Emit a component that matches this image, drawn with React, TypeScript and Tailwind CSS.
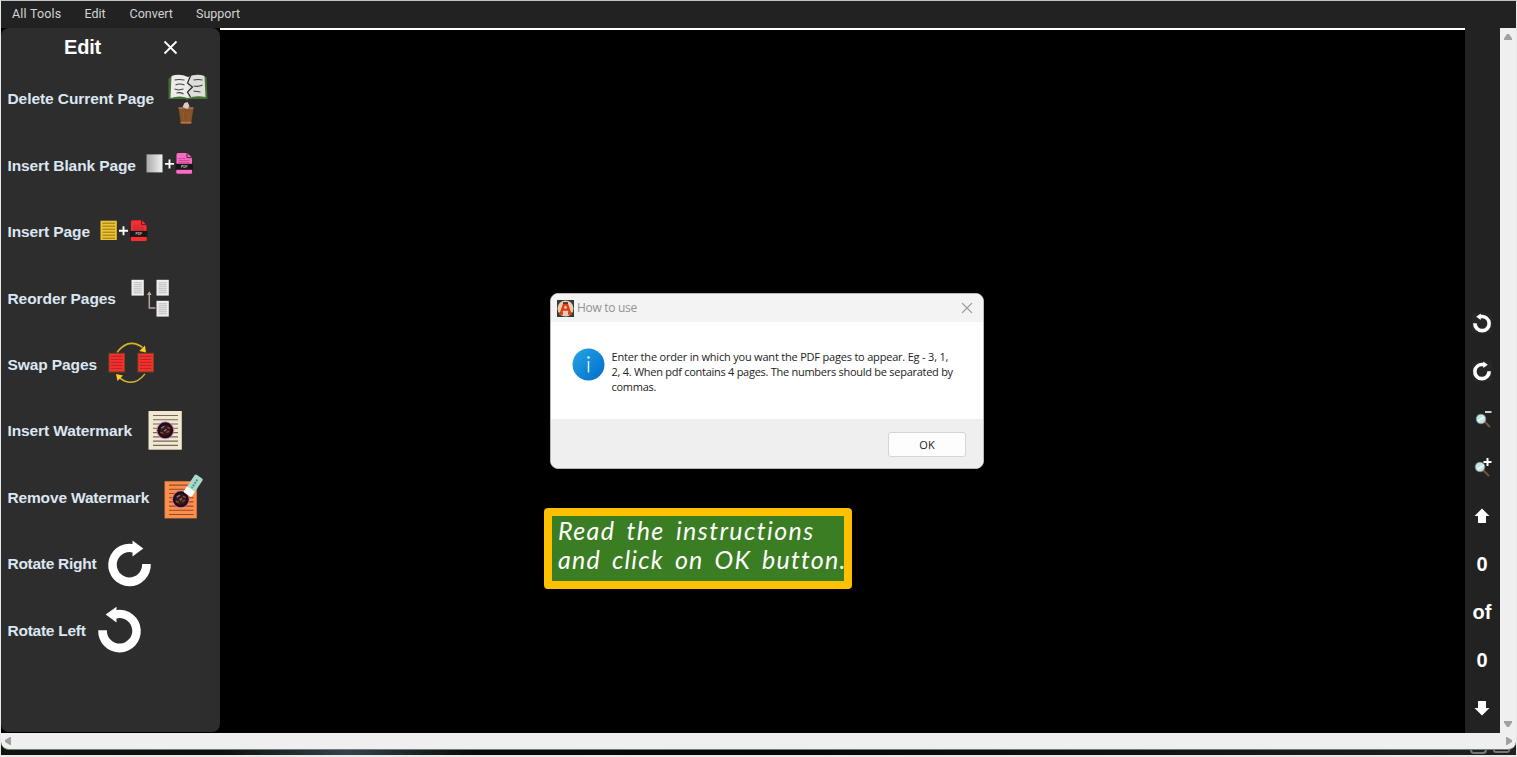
import type { ReactNode } from "react";

function PdfFile({ x, y, fill }: { x: number; y: number; fill: string }) {
  return (
    <g>
      <path d={`M${x + 1} ${y + 1.5}q0-1.5 1.5-1.5h9l5 4.5v15.500h-15.500z`} fill={fill} />
      <path d={`M${x + 11.500} ${y}v4.500h5`} fill="none" stroke="#33202b" strokeWidth="0.9" />
      <path d={`M${x + 3} ${y + 5.500}h7M${x + 3} ${y + 7.500}h11M${x + 3} ${y + 9.500}h11`} stroke="#6b2848" strokeOpacity="0.55" strokeWidth="0.8" />
      <rect x={x} y={y + 10.700} width="17.500" height="6" fill="#171717" />
      <text x={x + 8.800} y={y + 15} textAnchor="middle" fontSize="3.400" fontWeight="bold" fill="#bbb" fontFamily="Liberation Sans, sans-serif">PDF</text>
      <rect x={x + 1} y={y + 17} width="15.500" height="3.700" rx="1" fill={fill} />
    </g>
  );
}

function Lines({ x, y, w, n, gap, color, sw = 1 }: { x: number; y: number; w: number; n: number; gap: number; color: string; sw?: number }) {
  return <path d={Array.from({ length: n }, (_, i) => `M${x} ${y + i * gap}h${w}`).join("")} stroke={color} strokeWidth={sw} />;
}

function Stamp({ x, y }: { x: number; y: number }) {
  return (
    <g>
      <circle cx={x} cy={y} r="9" fill="#d66bc1" opacity="0.7" />
      <circle cx={x} cy={y} r="8" fill="#1c1013" />
      <circle cx={x} cy={y} r="5.500" fill="#321c1e" />
      <path d={`M${x - 4} ${y - 2}l3-2M${x - 1} ${y + 1}l2-2`} stroke="#8c8088" strokeWidth="1.300" />
      <path d={`M${x - 5} ${y + 2}l3 1M${x + 2} ${y - 3}l3 1M${x + 1} ${y + 2}l3-1`} stroke="#b93b2b" strokeWidth="1.400" />
    </g>
  );
}

function RotateRight({ x, y }: { x: number; y: number }) {
  return (
    <g transform={`translate(${x} ${y})`} fill="#fff">
      <path d="M12.600-.6H21.300A21.300 21.300 0 1 1 3-20.800V-24.100L13.800-16.200L3-8.300V-12.300A12.700 12.700 0 1 0 12.600-.6Z" />
    </g>
  );
}

const items: { label: string; w: string; iw: number; x: number; icon: ReactNode }[] = [
  {
    label: "Delete Current Page", w: "w-[158px] tracking-[-0.080px]", iw: 44, x: 166,
    icon: (
      <g>
        <path d="M168 79L170 77H206L207 99H188.500L187 100L185 99H168Z" fill="#477036" />
        <path d="M171 76Q179 73 187.500 77V98Q179 95 170 98Z" fill="#ececea" />
        <path d="M187.500 77Q196 73 204 76L205 97Q196 95 187.500 98Z" fill="#dededb" />
        <path d="M190 76L187 83L192 87L187 92L190 97" fill="none" stroke="#262626" strokeWidth="1.200" />
        <path d="M174 80q4-1 10 0M175 85q4-2 9 0M174 89l4 1 5-1M176 93q4-1 7 1M193 80q5-1 9 0M193 86q5 1 9-1M193 91l7 1" fill="none" stroke="#444" strokeWidth="1.100" />
        <path d="M178 108H193L190.500 124H180.500Z" fill="#875329" />
        <path d="M178 108H193M180 122.500h11" stroke="#b8753c" strokeWidth="1.500" />
        <path d="M183 112v8M188 112v8" stroke="#96592c" />
        <path d="M182 107l2-4 3-1 2 4-2 3z" fill="#d8ccd0" />
      </g>
    ),
  },
  {
    label: "Insert Blank Page", w: "w-[135px] tracking-[-0.100px]", iw: 55, x: 143,
    icon: (
      <g>
        <defs><linearGradient id="blank"><stop stopColor="#a9a9a9" /><stop offset="1" stopColor="#f1f1f1" /></linearGradient></defs>
        <rect x="146" y="154.800" width="16" height="18" fill="url(#blank)" />
        <path d="M164.500 164.300h9M169 159.800v9" stroke="#fff" strokeWidth="1.900" />
        <PdfFile x={175} y={153.500} fill="#ff6ac4" />
      </g>
    ),
  },
  {
    label: "Insert Page", w: "w-[89px] tracking-[-0.100px]", iw: 55, x: 97,
    icon: (
      <g>
        <rect x="100" y="220.500" width="16.300" height="19.300" fill="#efc32d" />
        <Lines x={102} y={223} w={12.500} n={6} gap={3} color="#8e7421" />
        <path d="M118.500 230.500h9M123 226v9" stroke="#fff" strokeWidth="1.900" />
        <PdfFile x={129.500} y={220} fill="#fb2d2f" />
      </g>
    ),
  },
  {
    label: "Reorder Pages", w: "w-[120px] tracking-[-0.080px]", iw: 44, x: 128,
    icon: (
      <g>
        {[[131, 280], [156, 280], [156, 301]].map(([x, y]) => (
          <g key={`${x}-${y}`}>
            <rect x={x} y={y} width="12.300" height="15.800" fill="#eee" />
            <Lines x={x + 2} y={y + 3} w={8.300} n={6} gap={2} color="#b5b5b5" sw={0.9} />
          </g>
        ))}
        <path d="M155 308.300H148.800V294" fill="none" stroke="#b5a594" strokeWidth="1.500" />
        <path d="M148.800 291.500l2.300 3.800h-4.600z" fill="#c5b09a" />
      </g>
    ),
  },
  {
    label: "Swap Pages", w: "w-[96px] tracking-[-0.100px]", iw: 54, x: 104,
    icon: (
      <g>
        {[108, 137].map((x) => (
          <g key={x}>
            <rect x={x + 0.500} y="353" width="15.500" height="18.500" fill="#f5302d" stroke="#81421e" />
            <Lines x={x + 2.500} y={356} w={11.500} n={5} gap={3} color="#b32622" />
          </g>
        ))}
        <path d="M116.500 352Q128 337 142 347M144.500 373.500Q133 388 119 377.500" fill="none" stroke="#d9b22c" strokeWidth="1.500" />
        <path d="M145.500 352l-1-7-5.700 5.500zM115.500 373.500l7 1.500-5.500 5.700z" fill="#ffc922" />
      </g>
    ),
  },
  {
    label: "Insert Watermark", w: "w-[131px] tracking-[-0.100px]", iw: 48, x: 139,
    icon: (
      <g>
        <rect x="148" y="411" width="33.300" height="38.700" fill="#f2e8cf" />
        <Lines x={152.500} y={415.500} w={25} n={8} gap={4.270} color="#6f6960" sw={1.100} />
        <Stamp x={164.800} y={430.300} />
      </g>
    ),
  },
  {
    label: "Remove Watermark", w: "w-[148px] tracking-[-0.160px]", iw: 50, x: 156,
    icon: (
      <g>
        <rect x="164.300" y="481.600" width="32" height="37" fill="#ff8e4b" stroke="#a76b43" strokeWidth="0.500" />
        <Lines x={168.500} y={485.500} w={24.500} n={8} gap={4.200} color="#8b4e2e" sw={1.100} />
        <Stamp x={180.300} y={499.700} />
        <g transform="translate(193 485.800) rotate(34)">
          <rect x="-4.800" y="-10.500" width="9.600" height="21" rx="1.500" fill="#a8d9cc" />
          <rect x="-4.800" y="4.500" width="9.600" height="6.500" rx="1" fill="#fff" />
          <path d="M0-7v10" stroke="#518f86" strokeWidth="2" strokeDasharray="2 1" />
        </g>
      </g>
    ),
  },
  { label: "Rotate Right", w: "w-[96px] tracking-[-0.280px]", iw: 50, x: 104, icon: <RotateRight x={129} y={564.5} /> },
  { label: "Rotate Left", w: "w-[86px] tracking-[-0.250px]", iw: 50, x: 94, icon: <g transform="translate(119 631) scale(-1 1)"><RotateRight x={0} y={0} /></g> },
];

function Sidebar() {
  return (
    <aside className="flex h-[704px] w-[219px] shrink-0 flex-col rounded-lg bg-[#2d2d2d]">
      <div className="flex h-[38px] shrink-0 items-center pl-[63px]">
        <h1 className="w-[99px] font-['Liberation_Sans',sans-serif] text-[20px] font-bold leading-none tracking-[-0.200px] text-white">Edit</h1>
        <svg width="15" height="15" viewBox="0 0 15 15"><path d="M1.500 1.500l12 12M13.500 1.500l-12 12" stroke="#fff" strokeWidth="1.800" /></svg>
      </div>
      <div className="flex flex-col">
        {items.map((it, i) => (
          <div key={it.label} className="flex h-[66.4px] shrink-0 items-center pl-[6.500px]">
            <span className={`${it.w} shrink-0 whitespace-nowrap font-['Liberation_Sans',sans-serif] text-[15.500px] font-bold leading-none text-[#dce6f1]`}>{it.label}</span>
            <svg width={it.iw} height="66.400" viewBox={`${it.x - 0.5} ${66 + i * 66.4} ${it.iw} 66.400`} overflow="visible">{it.icon}</svg>
          </div>
        ))}
      </div>
    </aside>
  );
}

function Dialog() {
  return (
    <section className="flex h-[176px] w-[434px] flex-col overflow-hidden rounded-lg border border-[#b8b8b8] bg-white font-['Open_Sans','Noto_Sans',sans-serif]">
      <header className="flex h-[28px] shrink-0 items-center bg-[#f3f3f3] pl-[6px] pr-[10px]">
        <svg width="17" height="17" viewBox="0 0 17 17" className="mr-[3px]">
          <rect width="17" height="17" fill="#343b3b" /><circle cx="8.500" cy="8.500" r="8" fill="#e6cfaa" />
          <path d="M4 13L7 4.500h3L13 13M6 9.700H11M2 13.500h4M11 13.500h4" fill="none" stroke="#df3a20" strokeWidth="2.300" />
          <path d="M6 3h5" stroke="#30201e" strokeWidth="1.300" />
        </svg>
        <span className="flex-1 text-[12px] leading-none tracking-[-0.300px] text-[#929292]">How to use</span>
        <svg width="12" height="12" viewBox="0 0 12 12"><path d="M1 1l10 10M11 1L1 11" stroke="#a0a0a0" strokeWidth="1.200" /></svg>
      </header>
      <div className="flex h-[97px] shrink-0 pl-[20.500px] pt-[26px]">
        <svg width="33" height="33" viewBox="0 0 33 33" className="mr-[7px]">
          <defs><linearGradient id="info" x2="1" y2="1"><stop stopColor="#26a5e4" /><stop offset="1" stopColor="#006bcb" /></linearGradient></defs>
          <circle cx="16.500" cy="16.500" r="16" fill="url(#info)" />
          <path d="M16.500 13v11.500" stroke="#d9f1ff" strokeWidth="1.500" /><circle cx="16.500" cy="9.500" r="1.300" fill="#d9f1ff" />
        </svg>
        <p className="mt-[1px] whitespace-nowrap text-[11px] leading-[15px] tracking-[-0.270px] text-[#222]">
          <span className="tracking-[-0.200px]">Enter the order in which you want the PDF pages to appear. Eg - 3, 1,</span><br />2, 4. When pdf contains 4 pages. The numbers should be separated by<br />commas.
        </p>
      </div>
      <footer className="flex flex-1 items-start justify-end bg-[#efefef] pr-[17px] pt-[13px]">
        <button className="h-[25px] w-[78px] rounded-[3px] border border-[#d5d5d5] bg-[#fdfdfd] text-[11px] leading-none text-[#202020]">OK</button>
      </footer>
    </section>
  );
}

function MiniRotate({ flip }: { flip?: boolean }) {
  return (
    <svg width="20" height="20" viewBox="-10 -10 20 20" className="bg-[#272727]">
      <g transform={flip ? "scale(-1 1)" : undefined}><g transform="translate(0 .5) scale(.42)"><RotateRight x={0} y={0} /></g></g>
    </svg>
  );
}

function Magnifier({ plus }: { plus?: boolean }) {
  return (
    <svg width="20" height="20" viewBox="0 0 20 20">
      <path d={plus ? "M10 12l7 7" : "M12 12l6 6"} stroke="#79503a" strokeWidth="1.900" />
      <circle cx={plus ? 8 : 9} cy="10" r="4.800" fill="#c6e4e2" stroke="#7d8b8b" strokeWidth="0.700" />
      <path d="M6 12l6-4" stroke="#f3ffff" strokeWidth="1.500" />
      {plus ? <path d="M11.500 5h8M15.500 1v8" stroke="#fff" strokeWidth="2" /> : <path d="M13 3h6.500" stroke="#ccc" strokeWidth="2" />}
    </svg>
  );
}

function Arrow({ down }: { down?: boolean }) {
  return <svg width="16" height="16" viewBox="0 0 16 16"><path d="M8 .500L15.500 8H12v7H4V8H.500Z" fill="#fff" transform={down ? "rotate(180 8 8)" : undefined} /></svg>;
}

function RightTools() {
  const tools = [<MiniRotate flip />, <MiniRotate />, <Magnifier />, <Magnifier plus />, <Arrow />, "0", "of", "0", <Arrow down />];
  return (
    <aside className="flex w-[35px] shrink-0 flex-col bg-[#222] pr-[1px] pt-[270.800px]">
      {tools.map((t, i) => <div key={i} className="flex h-[48.2px] shrink-0 items-center justify-center font-['Liberation_Sans',sans-serif] text-[20px] font-bold leading-none text-white">{t}</div>)}
    </aside>
  );
}

export default function App() {
  return (
    <div className="flex h-[757px] w-[1517px] flex-col overflow-hidden border-l border-r border-t border-l-[#e8e8e8] border-r-[#e8e8e8] border-t-[#bfc4c2] bg-black">
      <nav className="flex h-[27px] shrink-0 items-center bg-[#222] pb-px pl-[11px] font-[Roboto,sans-serif] text-[12.500px] leading-[18px] text-[#d4d4d4]">
        <span className="w-[72.500px] tracking-[0.200px]">All Tools</span><span className="w-[45px]">Edit</span><span className="w-[66.500px]">Convert</span><span>Support</span>
      </nav>
      <div className="flex h-[705px] shrink-0">
        <Sidebar />
        <main className="flex w-[1245px] shrink-0 flex-col border-t-2 border-white bg-black pl-[324px] pt-[263px]">
          <div className="pl-[6px]"><Dialog /></div>
          <div className="mt-[39px] h-[81px] w-[308px] whitespace-nowrap rounded-[4px] border-8 border-[#ffc000] bg-[#3b7d23] pl-[6px] font-[Lato,sans-serif] text-[25px] italic leading-[29px] text-white">
            <div className="tracking-[1.400px] [word-spacing:4px]">Read the instructions</div>
            <div className="tracking-[1.200px] [word-spacing:4px]">and click on OK button.</div>
          </div>
        </main>
        <RightTools />
        <div className="flex w-[16px] shrink-0 flex-col items-center justify-between bg-[#efefef] pb-[6px] pt-[6px]">
          <svg width="8" height="6"><path d="M0 6V4.500L3 0H5L8 4.500V6Z" fill="#a0a0a0" /></svg>
          <svg width="8" height="6"><path d="M0 0V1.500L3 6H5L8 1.500V0Z" fill="#a0a0a0" /></svg>
        </div>
      </div>
      <div className="h-[22px] shrink-0 bg-gradient-to-r from-[#111510] via-[#060806] to-[#202124]">
        <div className="flex h-[17px] items-center justify-between rounded-b-lg border-b border-[#737a77] bg-[#efefef] px-[4px]">
          <svg width="6" height="8"><path d="M6 0H5L0 3V5L5 8H6Z" fill="#a0a0a0" /></svg>
          <svg width="6" height="8"><path d="M0 0H1L6 3V5L1 8H0Z" fill="#a0a0a0" /></svg>
        </div>
        <div className="flex h-[5px] justify-end gap-[6px] pr-[6px]">
          <div className="ml-[220px] mr-auto h-[5px] w-[250px] bg-gradient-to-r from-transparent via-[#31434b] to-transparent" />
          <div className="h-[4px] w-[17px] rounded-b-sm border-2 border-t-0 border-[#777]" />
          <div className="h-[3px] w-[17px] rounded-b-sm border-2 border-t-0 border-[#777]" />
        </div>
      </div>
      <div className="h-[2px] shrink-0 bg-[#e8e8e8]" />
    </div>
  );
}
